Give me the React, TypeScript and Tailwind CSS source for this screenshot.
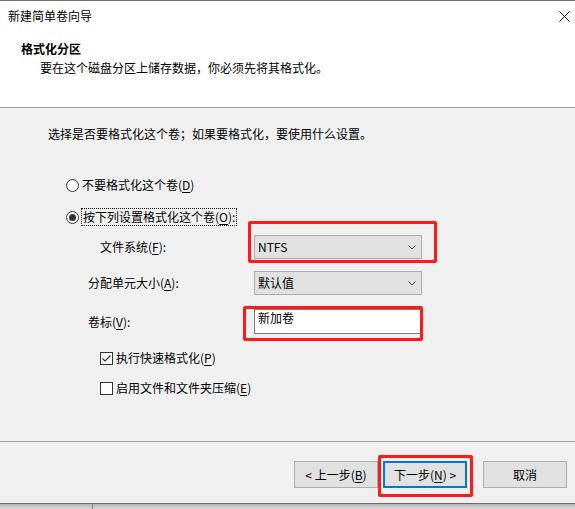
import { ReactNode } from 'react';

const U = ({ children }: { children: ReactNode }) => (
    <span className="underline underline-offset-[2px] decoration-1">{children}</span>
);

const Radio = ({ checked }: { checked?: boolean }) => (
    <span className="w-[13px] h-[13px] rounded-full border border-[#333333] bg-white flex items-center justify-center shrink-0">
        {checked && <span className="w-[7px] h-[7px] rounded-full bg-[#333333]" />}
    </span>
);

const Check = ({ checked }: { checked?: boolean }) => (
    <span className="w-[13px] h-[13px] border border-[#333333] bg-white flex items-center justify-center shrink-0">
        {checked && (
            <svg width="11" height="11" viewBox="0 0 11 11">
                <path d="M1.5 5.5 L4 8 L9.5 2.5" fill="none" stroke="#333333" strokeWidth="1.2" />
            </svg>
        )}
    </span>
);

const Chevron = () => (
    <svg width="8" height="5" viewBox="0 0 8 5" className="shrink-0">
        <path d="M0.5 0.5 L4 4 L7.5 0.5" fill="none" stroke="#444444" strokeWidth="1" />
    </svg>
);

const Select = ({ value }: { value: string }) => (
    <div className="w-[168px] h-[24px] border border-[#adadad] bg-[#e1e1e1] flex items-center justify-between pl-[3px] pr-[5px]">
        <span>{value}</span>
        <Chevron />
    </div>
);

const Button = ({ children, primary }: { children: ReactNode; primary?: boolean }) => (
    <div
        className={
            primary
                ? 'w-[84px] h-[27px] border-2 border-[#0078d7] bg-[#e1e1e1] flex items-center justify-center'
                : 'w-[84px] h-[27px] border border-[#adadad] bg-[#e1e1e1] flex items-center justify-center'
        }
    >
        {children}
    </div>
);

export default function App() {
    return (
        <div className="relative w-[575px] h-[509px] overflow-hidden bg-[#f0f0f0] text-[12px] leading-[16px] text-black font-['Noto_Sans_CJK_SC','Microsoft_YaHei',sans-serif]">
            {/* header */}
            <div className="h-px bg-[#6f6f6f]" />
            <div className="h-[106px] bg-white flex flex-col">
                <div className="h-[30px] flex items-center justify-between pl-[8px] pr-[5px]">
                    <span>新建简单卷向导</span>
                    <svg width="11" height="11" viewBox="0 0 11 11">
                        <path d="M0.5 0.5 L10.5 10.5 M10.5 0.5 L0.5 10.5" stroke="#111111" strokeWidth="1" />
                    </svg>
                </div>
                <div className="pl-[21px] pt-[10px] font-bold">格式化分区</div>
                <div className="pl-[40px] pt-[3px]">要在这个磁盘分区上储存数据，你必须先将其格式化。</div>
            </div>
            <div className="h-px bg-[#a0a0a0]" />

            {/* body */}
            <div className="h-[333px] flex flex-col">
                <div className="pl-[48px] pt-[18px]">选择是否要格式化这个卷；如果要格式化，要使用什么设置。</div>

                <div className="mt-[35px] pl-[66px] flex items-center gap-[3px]">
                    <Radio />
                    <span>不要格式化这个卷(<U>D</U>)</span>
                </div>
                <div className="mt-[15px] pl-[66px] flex items-center gap-[2px]">
                    <Radio checked />
                    <span className="border border-dotted border-black px-px">按下列设置格式化这个卷(<U>O</U>):</span>
                </div>

                <div className="mt-[9px] pl-[88px] flex items-center">
                    <span className="w-[166px] pl-[12px]">文件系统(<U>F</U>):</span>
                    <Select value="NTFS" />
                </div>
                <div className="mt-[12px] pl-[88px] flex items-center">
                    <span className="w-[166px]">分配单元大小(<U>A</U>):</span>
                    <Select value="默认值" />
                </div>
                <div className="mt-[14px] pl-[88px] flex items-center">
                    <span className="w-[166px]">卷标(<U>V</U>):</span>
                    <div className="w-[168px] h-[25px] border border-[#7a7a7a] bg-white pl-[3px]">新加卷</div>
                </div>

                <div className="mt-[16px] pl-[100px] flex items-center gap-[3px]">
                    <Check checked />
                    <span>执行快速格式化(<U>P</U>)</span>
                </div>
                <div className="mt-[14px] pl-[100px] flex items-center gap-[3px]">
                    <Check />
                    <span>启用文件和文件夹压缩(<U>E</U>)</span>
                </div>
            </div>
            <div className="h-px bg-[#a0a0a0]" />

            {/* footer */}
            <div className="h-[61px] flex justify-end pt-[19px] pr-[8px]">
                <Button>&lt; 上一步(<U>B</U>)</Button>
                <div className="ml-[5px]">
                    <Button primary>下一步(<U>N</U>) &gt;</Button>
                </div>
                <div className="ml-[16px]">
                    <Button>取消</Button>
                </div>
            </div>
            <div className="h-px bg-[#6b6b6b]" />
            <div className="h-[5px] flex bg-gradient-to-b from-[#b4b4b4] to-[#dcdcdc]">
                <div className="w-[92px]" />
                <div className="w-px bg-[#8a8a8a]" />
            </div>

            {/* red annotations */}
            <div className="absolute left-[248px] top-[221px] w-[189px] h-[42px] border-[3px] border-[#ff1a1a] rounded-[2px]" />
            <div className="absolute left-[243px] top-[306px] w-[180px] h-[35px] border-[3px] border-[#ff1a1a] rounded-[2px]" />
            <div className="absolute left-[378px] top-[455px] w-[95px] h-[42px] border-[3px] border-[#ff1a1a] rounded-[2px]" />
        </div>
    );
}
